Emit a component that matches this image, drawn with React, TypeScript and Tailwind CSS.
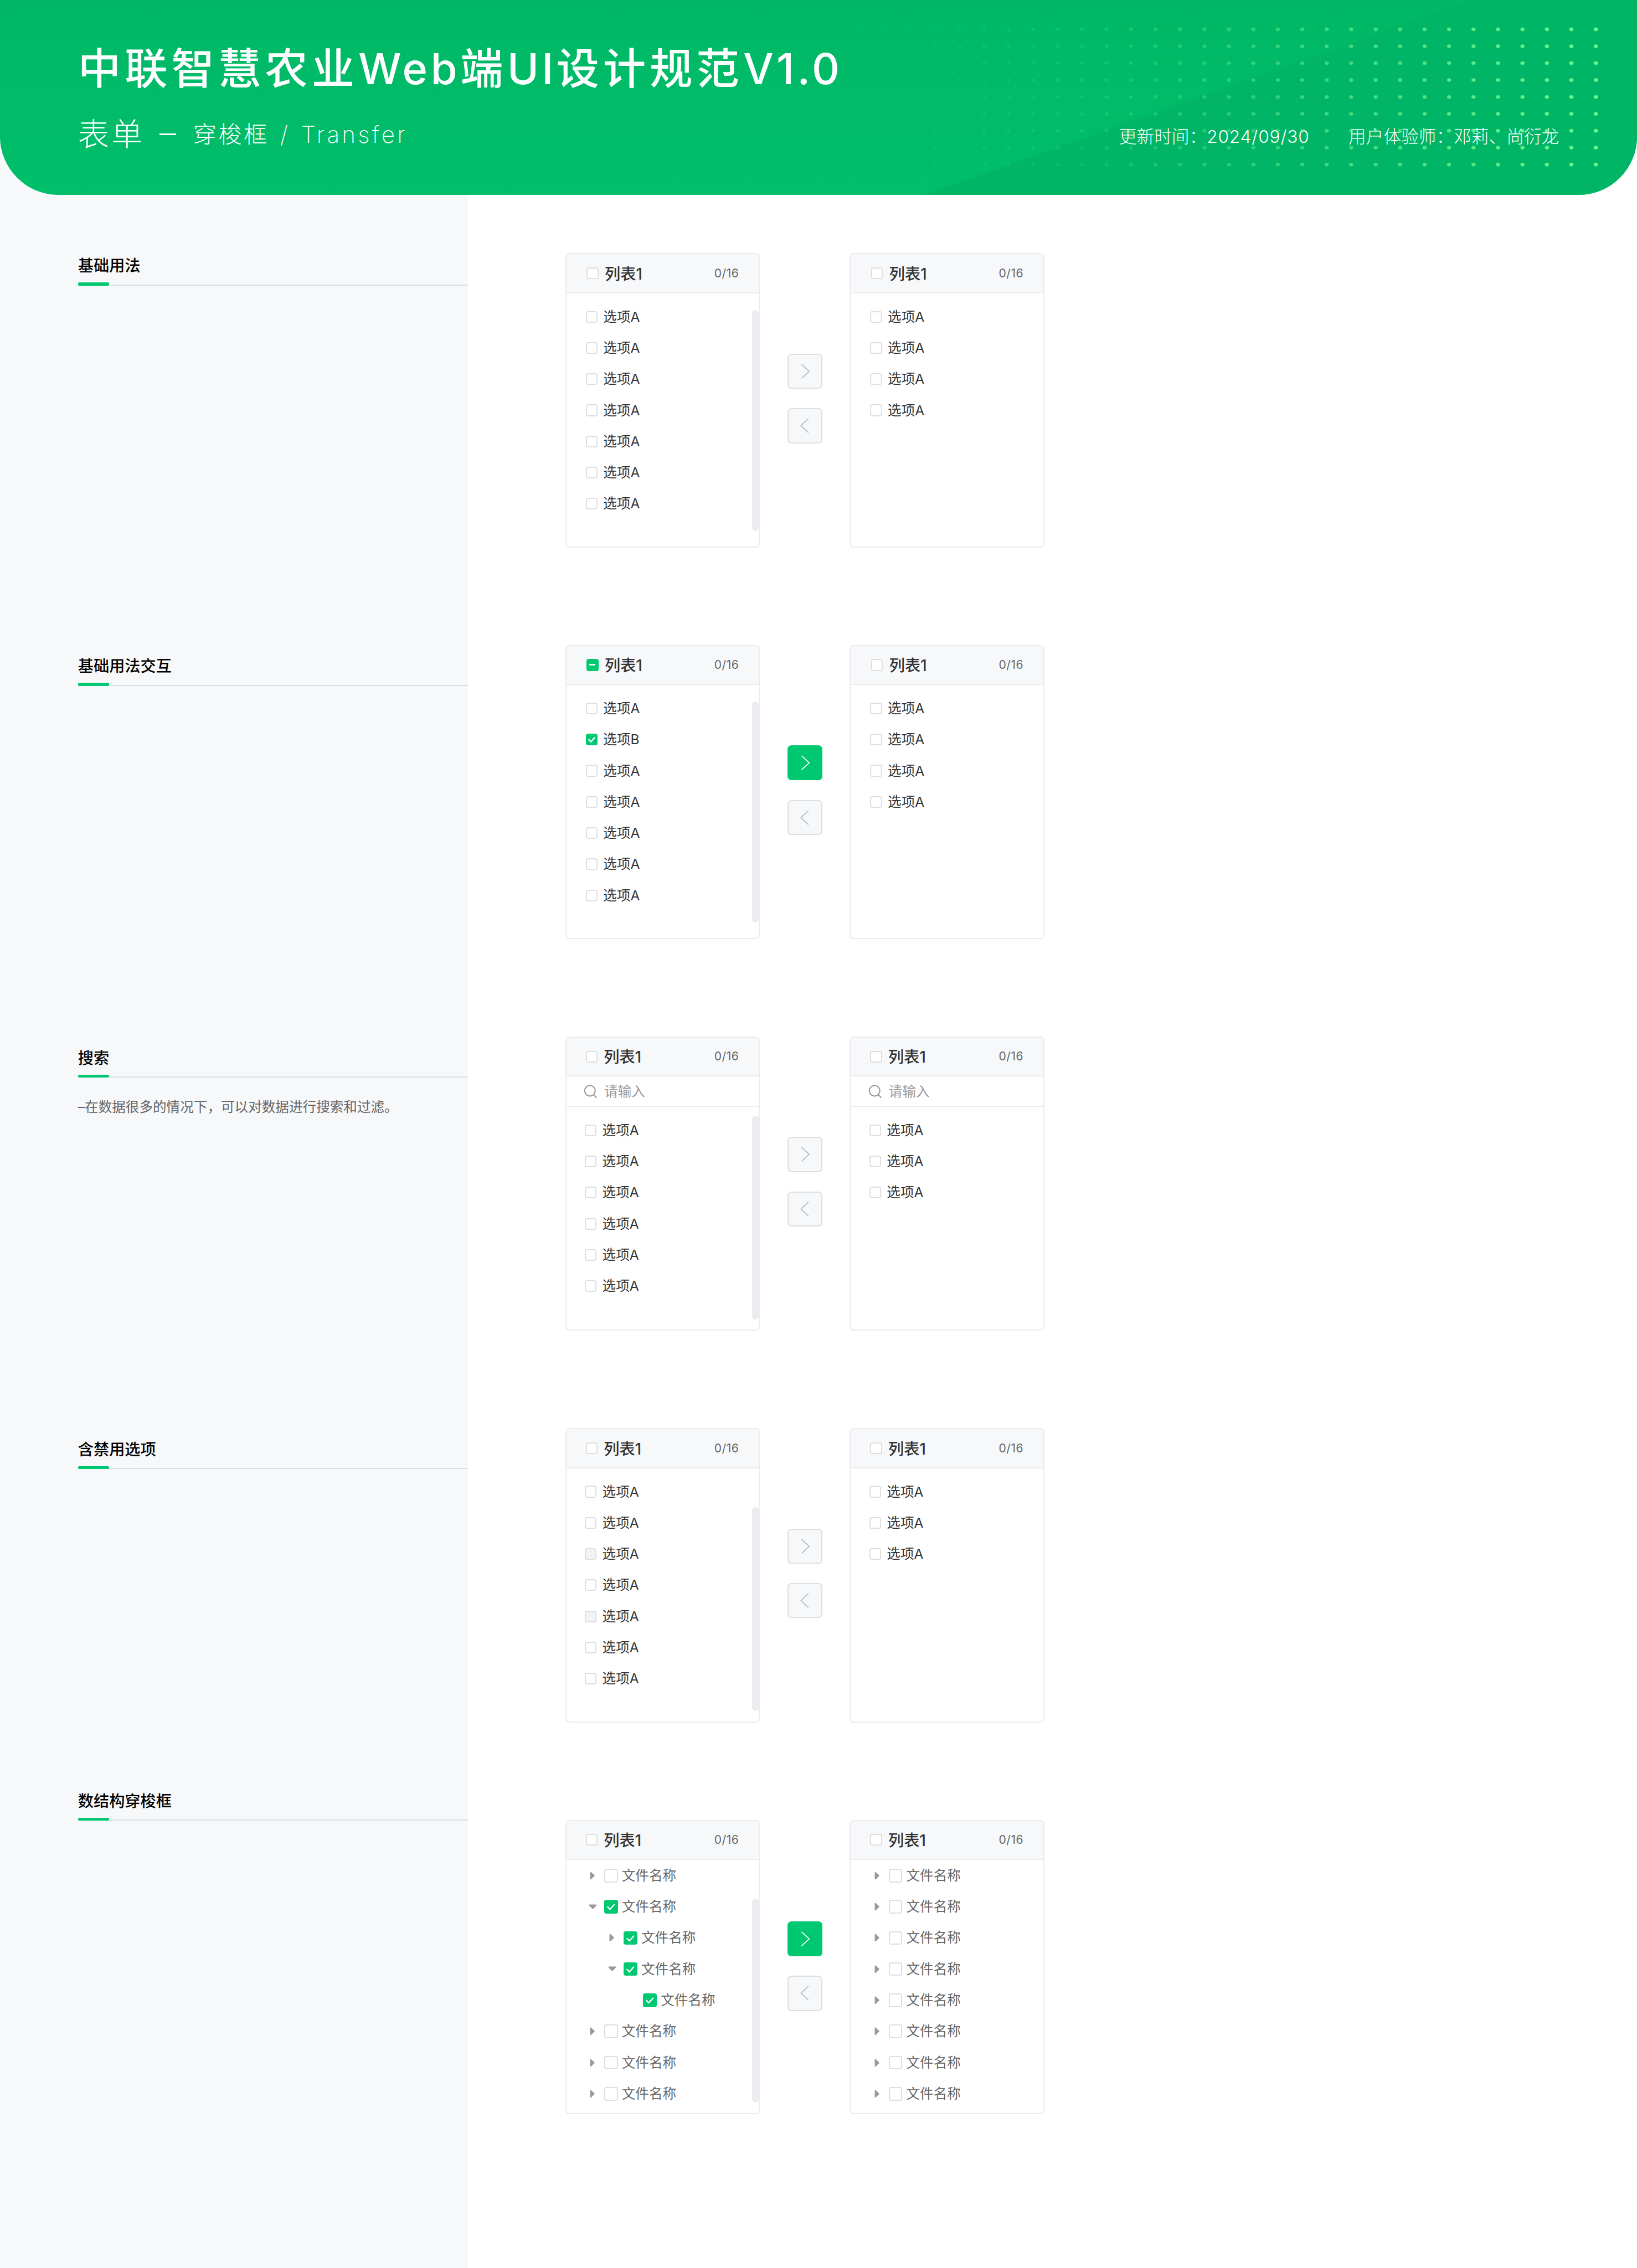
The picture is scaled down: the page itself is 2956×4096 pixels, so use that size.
const CARET_RIGHT = "M.5 1.6v10.8c0 1 1 1.4 1.7.7l5.6-5.3c.5-.5.5-1.1 0-1.6L2.2.9C1.5.2.5.6.5 1.6Z";
const CARET_DOWN = "M1.6.5h10.8c1 0 1.4 1 .7 1.7L7.8 7.8c-.5.5-1.1.5-1.6 0L.9 2.2C.2 1.5.6.5 1.6.5Z";

type BoxState = "empty" | "checked" | "partial" | "disabled";

function Checkbox({ state = "empty", large = false }: { state?: BoxState; large?: boolean }) {
  const size = large ? "size-28" : "size-24";
  if (state === "checked" || state === "partial") {
    return (
      <span className={`${size} flex shrink-0 rounded-[4px] bg-[#00c871]`}>
        <svg viewBox="0 0 24 24" className="size-full" fill="none" stroke="#fff" strokeWidth={large ? 2.3 : 2.8} strokeLinecap="round" strokeLinejoin="round">
          {state === "partial" ? <path d="M7 12h10" /> : <path d="M6.2 12.4l4 4.4 7.6-8.6" />}
        </svg>
      </span>
    );
  }
  return (
    <span className={`${size} shrink-0 rounded-[4px] border-2 border-[#dedfe1] ${state === "disabled" ? "bg-[#f2f3f5]" : "bg-white"}`} />
  );
}

function MoveButton({ dir, active = false }: { dir: "left" | "right"; active?: boolean }) {
  return (
    <button className={`flex size-72 rounded-[7px] ${active ? "bg-[#00c871]" : "border-2 border-[#dedfe1] bg-[#f7f8fa]"}`}>
      <svg viewBox={active ? "0 0 72 72" : "2 2 68 68"} className="size-full" fill="none" stroke={active ? "#fff" : "#b8b9ba"} strokeWidth="2" strokeLinecap="round" strokeLinejoin="round">
        <path d={dir === "right" ? "M29.5 22L44.5 36l-15 14" : "M42.5 22l-15 14 15 14"} />
      </svg>
    </button>
  );
}

function SearchField() {
  return (
    <div className="flex h-62 items-center border-b-2 border-[#ebecf0] pt-1 pl-36 text-[24.6px] text-[#999]">
      <svg viewBox="0 0 28 28" className="mr-14 size-28" fill="none" stroke="#999" strokeWidth="2.4" strokeLinecap="round">
        <circle cx="12.8" cy="12.5" r="10.8" />
        <path d="M20.4 20.4l5.6 5.8" />
      </svg>
      请输入
    </div>
  );
}

type TreeRow = { level: number; open?: boolean; leaf?: boolean; checked?: boolean };

function TreeItem({ level, open, leaf, checked }: TreeRow) {
  const indent = ["pl-45", "pl-85", "pl-125"][level];
  return (
    <li className={`flex h-64 items-center text-[24.6px] text-[#666] ${indent}`}>
      <span className="mr-15 flex w-18 justify-center">
        {!leaf && (
          <svg viewBox={open ? "0 0 14 9" : "0 0 9 14"} className={open ? "h-11 w-17" : "h-17 w-11"} fill="#999">
            <path d={open ? CARET_DOWN : CARET_RIGHT} />
          </svg>
        )}
      </span>
      <Checkbox large state={checked ? "checked" : "empty"} />
      <span className="ml-8">文件名称</span>
    </li>
  );
}

type Option = { label?: string; state?: BoxState };

type PanelProps = {
  head?: BoxState;
  options?: Option[];
  tree?: TreeRow[];
  search?: boolean;
  inset?: boolean;
  bar?: "tall" | "short";
};

function Panel({ head, options, tree, search, inset, bar }: PanelProps) {
  return (
    <section className="relative h-604 w-400 overflow-hidden rounded-[7px] border-2 border-[#ebecf0] bg-white">
      <header className={`flex h-80 items-center border-b-2 border-[#ebecf0] bg-[#f7f8fa] pr-41 ${inset ? "pl-40" : "pl-42"}`}>
        <Checkbox state={head} />
        <h3 className="ml-13 pt-3 text-[28.2px] font-medium text-[#333]">列表1</h3>
        <span className="ml-auto text-[21.1px] tracking-[0.5px] text-[#666]">0/16</span>
      </header>
      {search && <SearchField />}
      {options && (
        <ul className={`pt-16 ${inset ? "pl-38" : "pl-40"}`}>
          {options.map((o, i) => (
            <li key={i} className="flex h-64 items-center text-[24.6px] text-[#333]">
              <Checkbox state={o.state} />
              <span className="ml-12">{o.label ?? "选项A"}</span>
            </li>
          ))}
        </ul>
      )}
      {tree && <ul>{tree.map((t, i) => <TreeItem key={i} {...t} />)}</ul>}
      {bar && (
        <span className={`absolute right-0 w-14 rounded-[7px] bg-[#ebecf0] ${bar === "tall" ? "top-114 h-454" : "top-160 h-418"}`} />
      )}
    </section>
  );
}

type TransferProps = { left: PanelProps; right: PanelProps; active?: boolean };

function Transfer({ left, right, active }: TransferProps) {
  return (
    <div className="flex">
      <Panel {...left} />
      <div className={`mx-56 flex flex-col gap-40 ${left.tree ? "pt-208" : "pt-206"}`}>
        <MoveButton dir="right" active={active} />
        <MoveButton dir="left" />
      </div>
      <Panel {...right} />
    </div>
  );
}

const rows = (n: number): Option[] => Array.from({ length: n }, () => ({}));
const closed = (n: number): TreeRow[] => Array.from({ length: n }, () => ({ level: 0 }));

const partlyChecked: Option[] = [{}, { label: "选项B", state: "checked" }, ...rows(5)];
const partlyDisabled: Option[] = [{}, {}, { state: "disabled" }, {}, { state: "disabled" }, {}, {}];
const openTree: TreeRow[] = [
  { level: 0 },
  { level: 0, open: true, checked: true },
  { level: 1, checked: true },
  { level: 1, open: true, checked: true },
  { level: 2, leaf: true, checked: true },
  ...closed(3),
];

const chapters = [
  { title: "基础用法", height: "h-822" },
  { title: "基础用法交互", height: "h-804" },
  { title: "搜索", height: "h-804", note: "–在数据很多的情况下，可以对数据进行搜索和过滤。" },
  { title: "含禁用选项", height: "h-722" },
  { title: "数结构穿梭框", height: "h-200" },
];

function Banner() {
  return (
    <header className="relative z-10 flex h-400 justify-between overflow-hidden rounded-b-[105.5px] bg-linear-to-b from-[#00b866] to-[#00be6a] px-160 text-white">
      <svg viewBox="0 0 3360 400" className="absolute inset-0 size-full">
        <path d="M3020 0H3360V400H1897Z" fill="#00b565" />
      </svg>
      <div className="relative">
        <h1 className="mt-98 h-88 text-[77.4px] leading-none font-medium tracking-[7px]">
          中联智慧农业<span className="tracking-[5.7px]">Web</span>端<span className="tracking-[5.2px]">UI</span>设计规范<span className="tracking-[5.2px]">V1.0</span>
        </h1>
        <p className="mt-58 flex h-64 items-center text-[56.3px] leading-none font-light tracking-[4.2px]">
          表单<span className="ml-30 h-3 w-34 bg-white" />
          <span className="ml-35 text-[42.2px] tracking-[3.4px]">
            穿梭框<span className="ml-23 font-extralight">/</span><span className="ml-23 font-extralight tracking-[4.2px]">Transfer</span>
          </span>
        </p>
      </div>
      <p className="relative mt-254 flex gap-80 text-[31.7px] font-light">
        <span>更新时间：<span className="tracking-[0.8px]">2024/09/30</span></span>
        <span>用户体验师：邓莉、尚衍龙</span>
      </p>
      <svg viewBox="0 0 3360 400" className="pointer-events-none absolute inset-0 size-full">
        <defs>
          <pattern id="dots" x="3250.5" y="42.9" width="50.22" height="34.7" patternUnits="userSpaceOnUse">
            <ellipse cx="25.11" cy="17.35" rx="4.3" ry="3.5" fill="#70fa92" />
          </pattern>
          <linearGradient id="fade">
            <stop offset="0" stopColor="#fff" stopOpacity="0" />
            <stop offset="0.35" stopColor="#fff" stopOpacity="0.17" />
            <stop offset="0.67" stopColor="#fff" stopOpacity="0.58" />
            <stop offset="1" stopColor="#fff" />
          </linearGradient>
          <mask id="dotMask">
            <rect x="1740" y="42" width="1540" height="313" fill="url(#fade)" />
          </mask>
        </defs>
        <rect x="1740" y="43" width="1560" height="312" fill="url(#dots)" mask="url(#dotMask)" />
      </svg>
    </header>
  );
}

/* --spacing is one design pixel, so w-400 is 400 units of the 3360-unit artboard. */
export default function App() {
  return (
    <div className="flex h-[4096px] w-[2956px] flex-col overflow-hidden bg-white font-['Inter','Noto_Sans_CJK_SC',sans-serif] [--spacing:0.87976px]">
      <Banner />
      <main className="-mt-120 flex grow">
        <aside className="w-960 bg-[#f7f8fa] pt-240 pl-160">
          {chapters.map((c) => (
            <section key={c.title} className={c.height}>
              <h2 className="flex h-66 items-center border-b-2 border-[#dcdee0] pb-12 text-[28.2px] font-medium text-black">{c.title}</h2>
              <div className="-mt-6 h-6 w-64 rounded-[2px] bg-[#00c871]" />
              {c.note && <p className="mt-40 text-[24.6px] text-[#666]">{c.note}</p>}
            </section>
          ))}
        </aside>
        <div className="flex flex-col gap-200 pt-240 pl-200">
          <Transfer left={{ options: rows(7), bar: "tall" }} right={{ options: rows(4) }} />
          <Transfer active left={{ head: "partial", options: partlyChecked, bar: "tall" }} right={{ options: rows(4) }} />
          <Transfer left={{ inset: true, search: true, options: rows(6), bar: "short" }} right={{ inset: true, search: true, options: rows(3) }} />
          <Transfer left={{ inset: true, options: partlyDisabled, bar: "short" }} right={{ inset: true, options: rows(3) }} />
          <Transfer active left={{ inset: true, tree: openTree, bar: "short" }} right={{ inset: true, tree: closed(8) }} />
        </div>
      </main>
    </div>
  );
}
